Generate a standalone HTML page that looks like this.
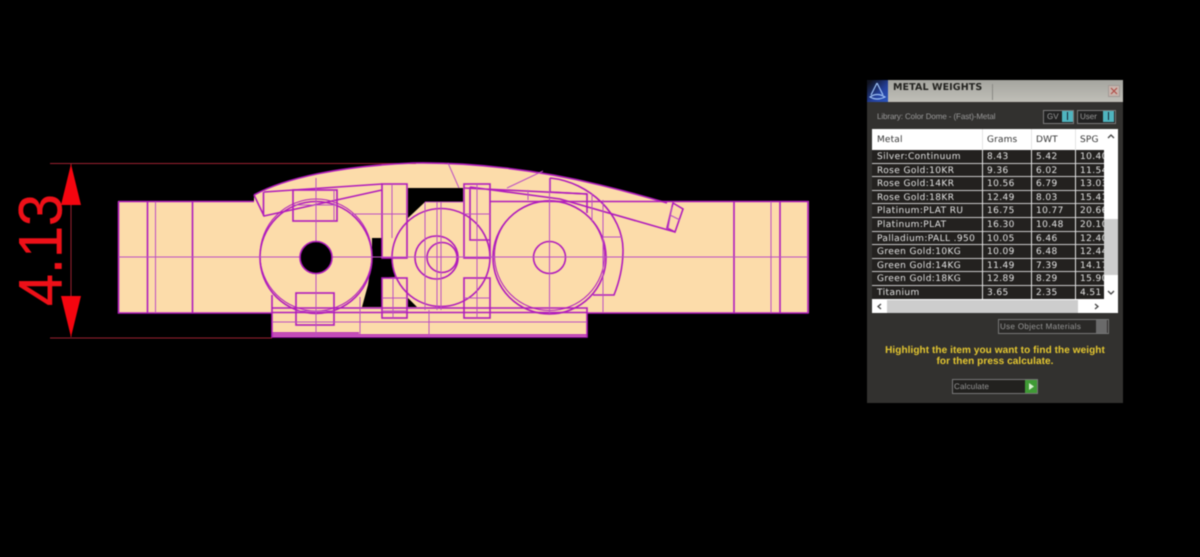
<!DOCTYPE html>
<html><head><meta charset="utf-8">
<style>
html,body{margin:0;padding:0;background:#000;width:1200px;height:557px;overflow:hidden}
#art{position:absolute;left:0;top:0;filter:blur(.4px)}
#p{position:absolute;left:867px;top:80px;width:256px;height:323px;background:#32312f;overflow:hidden;filter:blur(.4px);font-family:"DejaVu Sans",sans-serif;text-rendering:geometricPrecision}
#p div{position:absolute;white-space:nowrap}
.t{font-size:9px;letter-spacing:.4px;color:#e2e2e2;line-height:13px;top:1px;height:13px}
.r{left:5px;width:232px;background:#23211f;overflow:hidden;border-bottom:1px solid #c8c8c8}
.h{font-size:9px;letter-spacing:.15px;color:#333;line-height:13px}
.v{top:49px;width:1px;height:170px;background:#e4e4e4}
.y{left:0;width:256px;text-align:center;color:#e6c830;font:bold 10px "Liberation Sans",sans-serif;letter-spacing:.08px}
.g{font:8px "Liberation Sans",sans-serif;color:#9a9a9a}
</style></head><body>
<svg id="art" width="860" height="557" viewBox="0 0 860 557" xmlns="http://www.w3.org/2000/svg">
<!-- fills -->
<g fill="#fcdcaa" stroke="none">
<rect x="118" y="201" width="691" height="112"/>
<path d="M254 195C285 178 340 166 413 163C470 162 540 170 600 185C625 191 650 198 667 203L683 209L675 232L808 232L808 313L587 313L587 337L272 337L272 313L254 313Z"/>
</g>
<!-- voids -->
<g fill="#000">
<path d="M408 188L463 188L463 201.5L425 202L408 218Z"/>
<path d="M372 238L382 238L382 258L392 258L395 277L382 278L382 307L362 307L368 285L372 258Z"/>
<path d="M408 307L408 298L417 307Z"/>
<rect x="118" y="165" width="132" height="36"/>
<rect x="118" y="314" width="154" height="24"/>
</g>
<!-- dimension -->
<g stroke="#9a2030" stroke-width="1" fill="none">
<path d="M50 163.5H416M50 338H272M71 164V337"/>
</g>
<path d="M71 164L81 205H61ZM71 337L61 296H81Z" fill="#f5050f"/>
<text transform="translate(61.5 306) rotate(-90)" font-family="Liberation Sans,sans-serif" font-size="61" fill="#ee1018" stroke="#ee1018" stroke-width=".4" textLength="112" lengthAdjust="spacingAndGlyphs">4.13</text>
<!-- thick magenta -->
<g fill="none" stroke="#b01cbc" stroke-width="1.6">
<path d="M118.5 201.5H254M118.5 201.5V313H272M490 201.5H808V313H587"/>
<path d="M147.5 201.5V313M192.5 201.5V313M734 201.5V313M780 201.5V313"/>
<path d="M254 195C285 178 340 166 413 163C470 162 540 170 600 185C625 191 650 198 667 203"/>
<path d="M254 195L264 216L382 190M264 192L382 184M263.500 192V216"/>
<rect x="293" y="190" width="44" height="31"/>
<rect x="382" y="184" width="25" height="74"/>
<rect x="382" y="278" width="25" height="40"/>
<rect x="296" y="293" width="38" height="32"/>
<rect x="464" y="184" width="26" height="74"/>
<path d="M470 187V240H490M470 187L560 199L675 232M464 188L587 194"/>
<rect x="464" y="278" width="26" height="40"/>
<path d="M550 178V192L587 194V213"/>
<path d="M550 178C590 182 623 215 623 250C623 270 618 285 614 295H593"/>
<path d="M673 203L683 209L675 232L667 228Z"/>
<path d="M272 295V337H587V308H272M272 333H359M272 335H587M272 312.500H587"/>
<circle cx="316" cy="257.5" r="56"/>
<circle cx="316" cy="255" r="56" stroke-width="1"/>
<circle cx="441" cy="257.5" r="49"/>
<circle cx="436.5" cy="257.5" r="21.5"/>
<circle cx="442" cy="257.5" r="15"/>
<circle cx="549.5" cy="257.5" r="56.5"/>
<circle cx="549.5" cy="255.5" r="55" stroke-width="1"/>
<circle cx="549.5" cy="257.5" r="16"/>
</g>
<!-- thin magenta -->
<g fill="none" stroke="#bc50c2" stroke-width="1">
<path d="M118.5 257H808M155.500 201.5V313M771 201.5V313"/>
<path d="M293 205H337M316 178V337M334 190V221M350 214H382M392 184V238M382 214H407"/>
<path d="M382 298H407M393 278V318M382 311H407M296 311H334M272 322H587M360 297V334M429 310V337"/>
<path d="M425 202V310M441 202V310M437 202V310M425 202H464"/>
<path d="M448 163L459 188M507 188L543 171M477 184V318M464 298H490M464 214H490"/>
<path d="M549.5 178V313M528 190V200M592 194V222M603 200V312M603 237H622M670 215L680 220M672 207L668 229"/>
</g>
<circle cx="316" cy="257.5" r="16" fill="#000" stroke="#b01cbc" stroke-width="1.6"/>
</svg>
<div id="p">
<!-- title bar -->
<div style="left:0;top:0;width:256px;height:22px;background:linear-gradient(#a5a59f,#c0bfb8)"></div>
<div style="left:0;top:0;width:21px;height:22px;background:linear-gradient(135deg,#10131f 10%,#24409c 60%,#2a55c0)"></div>
<svg style="position:absolute;left:0;top:0" width="21" height="22" viewBox="0 0 21 22"><path d="M10 3L4 15M10 3L16 15M3 17Q10 12 18 17Q10 21 3 17Z" fill="none" stroke="#9cc0f5" stroke-width="1.2"/></svg>
<div style="left:26px;top:2px;font:bold 9.5px 'DejaVu Sans',sans-serif;letter-spacing:.1px;color:#22221f;line-height:12px">METAL WEIGHTS</div>
<div style="left:125px;top:4px;width:1px;height:16px;background:#8a8a85"></div>
<div style="left:241px;top:5px;width:10px;height:10px;background:#c9b4ac;border:1px solid #a09a96"></div>
<svg style="position:absolute;left:241px;top:5px" width="12" height="12"><path d="M3 3L9 9M9 3L3 9" stroke="#b04a44" stroke-width="1.1"/></svg>
<!-- top -->
<div class="g" style="left:10px;top:31px;line-height:11px;letter-spacing:-.1px">Library: Color Dome - (Fast)-Metal</div>
<div style="left:176px;top:30px;width:29px;height:12px;border:1px solid #7a7a7a;background:#222"></div>
<div class="g" style="left:180px;top:31px;line-height:11px">GV</div>
<div style="left:195px;top:31px;width:11px;height:11px;background:#4fb4bf"></div>
<div style="left:200px;top:32px;width:1px;height:8px;background:#123"></div>
<div style="left:210px;top:30px;width:37px;height:12px;border:1px solid #7a7a7a;background:#222"></div>
<div class="g" style="left:213px;top:31px;line-height:11px">User</div>
<div style="left:236px;top:31px;width:11px;height:11px;background:#4fb4bf"></div>
<div style="left:241px;top:32px;width:1px;height:8px;background:#123"></div>
<!-- table -->
<div style="left:5px;top:49px;width:246px;height:184px;background:#fff"></div>
<div class="h" style="left:10px;top:54px">Metal</div>
<div class="h" style="left:120px;top:54px">Grams</div>
<div class="h" style="left:169px;top:54px">DWT</div>
<div class="h" style="left:213px;top:54px">SPG</div>
<div class="r" style="top:70px;height:13px"><div class="t" style="left:5px">Silver:Continuum</div><div class="t" style="left:115px">8.43</div><div class="t" style="left:164px">5.42</div><div class="t" style="left:208px">10.40</div></div>
<div class="r" style="top:84px;height:12px"><div class="t" style="left:5px">Rose Gold:10KR</div><div class="t" style="left:115px">9.36</div><div class="t" style="left:164px">6.02</div><div class="t" style="left:208px">11.54</div></div>
<div class="r" style="top:97px;height:13px"><div class="t" style="left:5px">Rose Gold:14KR</div><div class="t" style="left:115px">10.56</div><div class="t" style="left:164px">6.79</div><div class="t" style="left:208px">13.03</div></div>
<div class="r" style="top:111px;height:12px"><div class="t" style="left:5px">Rose Gold:18KR</div><div class="t" style="left:115px">12.49</div><div class="t" style="left:164px">8.03</div><div class="t" style="left:208px">15.41</div></div>
<div class="r" style="top:124px;height:13px"><div class="t" style="left:5px">Platinum:PLAT RU</div><div class="t" style="left:115px">16.75</div><div class="t" style="left:164px">10.77</div><div class="t" style="left:208px">20.66</div></div>
<div class="r" style="top:138px;height:13px"><div class="t" style="left:5px">Platinum:PLAT</div><div class="t" style="left:115px">16.30</div><div class="t" style="left:164px">10.48</div><div class="t" style="left:208px">20.10</div></div>
<div class="r" style="top:152px;height:12px"><div class="t" style="left:5px">Palladium:PALL .950</div><div class="t" style="left:115px">10.05</div><div class="t" style="left:164px">6.46</div><div class="t" style="left:208px">12.40</div></div>
<div class="r" style="top:165px;height:13px"><div class="t" style="left:5px">Green Gold:10KG</div><div class="t" style="left:115px">10.09</div><div class="t" style="left:164px">6.48</div><div class="t" style="left:208px">12.44</div></div>
<div class="r" style="top:179px;height:12px"><div class="t" style="left:5px">Green Gold:14KG</div><div class="t" style="left:115px">11.49</div><div class="t" style="left:164px">7.39</div><div class="t" style="left:208px">14.17</div></div>
<div class="r" style="top:192px;height:13px"><div class="t" style="left:5px">Green Gold:18KG</div><div class="t" style="left:115px">12.89</div><div class="t" style="left:164px">8.29</div><div class="t" style="left:208px">15.90</div></div>
<div class="r" style="top:206px;height:13px;border:0"><div class="t" style="left:5px">Titanium</div><div class="t" style="left:115px">3.65</div><div class="t" style="left:164px">2.35</div><div class="t" style="left:208px">4.51</div></div>
<div class="v" style="left:115px"></div>
<div class="v" style="left:164px"></div>
<div class="v" style="left:208px"></div>
<!-- scrollbars -->
<div style="left:237px;top:139px;width:14px;height:56px;background:#cdcdcd"></div>
<div style="left:20px;top:220px;width:191px;height:13px;background:#cdcdcd"></div>
<svg style="position:absolute;left:0;top:0" width="256" height="240"><path d="M241 58L244 55L247 58M241 211L244 214L247 211M14 224L11 226.500L14 229M228 224L231 226.500L228 229" fill="none" stroke="#444" stroke-width="1.3"/></svg>
<!-- lower -->
<div style="left:131px;top:239px;width:109px;height:13px;border:1px solid #777;background:#2a2927"></div>
<div class="g" style="left:133px;top:241px;line-height:11px;letter-spacing:.35px">Use Object Materials</div>
<div style="left:229px;top:240px;width:11px;height:13px;background:#6a6a6a"></div>
<div class="y" style="top:265px;line-height:12px">Highlight the item you want to find the weight</div>
<div class="y" style="top:276px;line-height:12px">for then press calculate.</div>
<div style="left:85px;top:299px;width:84px;height:13px;border:1px solid #777;background:#22211f"></div>
<div class="g" style="left:87px;top:301px;line-height:12px;letter-spacing:.2px">Calculate</div>
<div style="left:158px;top:300px;width:12px;height:13px;background:#3f9a35"></div>
<svg style="position:absolute;left:158px;top:300px" width="12" height="13"><path d="M4 3L9 6.5L4 10Z" fill="#d8f0d0"/></svg>
</div>
</body></html>
